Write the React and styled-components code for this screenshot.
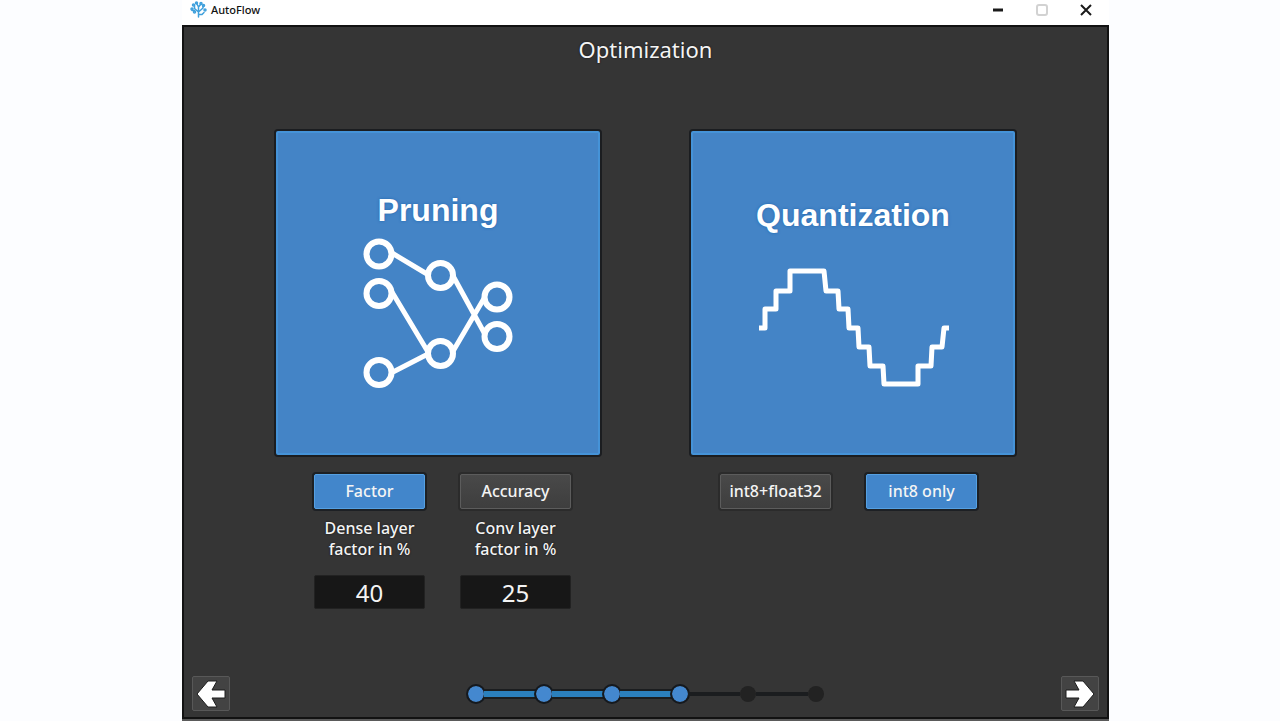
import React, { useState } from 'react';
import styled, { createGlobalStyle } from 'styled-components';

const GlobalStyle = createGlobalStyle`
  * {
    box-sizing: border-box;
  }
  body {
    margin: 0;
    background-color: #fcfdff;
    font-family: "Noto Sans", "Open Sans", sans-serif;
  }
`;

const Page = styled.div`
  display: grid;
  grid-template-columns: 182fr 927fr 171fr;
  min-height: 100vh;
`;

const Window = styled.div`
  grid-column: 2;
  display: flex;
  flex-direction: column;
  min-width: 0;
  border-bottom: 2px solid #5a5a5a;
`;

const TitleBar = styled.header`
  display: flex;
  align-items: center;
  height: 25px;
  padding: 0 13px 6px 8px;
  background-color: #fff;
`;

const AppName = styled.span`
  flex: 1;
  padding-left: 4px;
  font-size: 11px;
  line-height: 16px;
  font-weight: 500;
  color: #111;
`;

const WindowControls = styled.div`
  display: flex;
  gap: 24px;
`;

const ControlButton = styled.button`
  display: flex;
  align-items: center;
  justify-content: center;
  width: 20px;
  height: 18px;
  padding: 0;
  border: none;
  background: none;
  color: ${({ disabled }) => (disabled ? '#d2d2d2' : '#1a1a1a')};
`;

const Content = styled.main`
  flex: 1;
  display: flex;
  flex-direction: column;
  padding: 6px 8px;
  border: 2px solid #121212;
  background-color: #353535;
`;

const Title = styled.h1`
  margin: 0 0 66px;
  font-size: 22px;
  line-height: 32px;
  font-weight: 400;
  text-align: center;
  color: #f4f4f4;
  text-shadow: 0 0 2px #111;
`;

const Methods = styled.div`
  display: flex;
  justify-content: center;
  gap: 91px;
`;

const Method = styled.section`
  width: 324px;
`;

const Card = styled.div`
  display: flex;
  flex-direction: column;
  align-items: center;
  justify-content: center;
  gap: 8px;
  height: 324px;
  padding-bottom: 4px;
  border: 2px solid #4593d8;
  border-radius: 2px;
  background-color: #4484c6;
  box-shadow: 0 0 0 2px #1b1d20;
`;

const CardTitle = styled.h2`
  margin: 0;
  font-family: "Liberation Sans", Arial, sans-serif;
  font-size: 32px;
  line-height: 36px;
  font-weight: 700;
  color: #fff;
  text-shadow: 0 0 3px #1f66ae;
`;

const Drawing = styled.svg`
  overflow: visible;
  fill: none;
  stroke: #fff;
  stroke-width: 5;
`;

const Options = styled.div`
  display: flex;
  justify-content: ${({ $align }) => $align};
  gap: 35px;
  padding: 19px ${({ $align }) => ($align === 'flex-end' ? '38px 0 0' : '0 0 38px')};
`;

const Option = styled.div`
  display: flex;
  flex-direction: column;
  width: 111px;
`;

const OptionButton = styled.button`
  height: 35px;
  padding: 0;
  border: 1px solid ${({ $active }) => ($active ? '#55a0e2' : '#5c5c5c')};
  border-radius: 2px;
  background: ${({ $active }) => ($active ? '#4286cb' : 'linear-gradient(#494949, #3e3e3e)')};
  box-shadow: 0 0 0 2px ${({ $active }) => ($active ? '#1d2024' : '#2b2b2b')};
  font-family: inherit;
  font-size: 16px;
  line-height: 21px;
  font-weight: 500;
  white-space: nowrap;
  color: #f4f4f4;
`;

const OptionLabel = styled.label`
  padding: 9px 0 15px;
  font-size: 16px;
  line-height: 21px;
  font-weight: 500;
  text-align: center;
  color: #f4f4f4;
  text-shadow: 0 0 2px #111;
`;

const OptionInput = styled.input`
  width: 100%;
  height: 34px;
  padding: 0;
  border: 1px solid #222;
  border-radius: 2px;
  background-color: #171717;
  font-family: inherit;
  font-size: 24px;
  line-height: 32px;
  text-align: center;
  color: #f4f4f4;
`;

const Footer = styled.footer`
  display: flex;
  align-items: center;
  justify-content: space-between;
  margin-top: auto;
`;

const NavButton = styled.button`
  display: flex;
  align-items: center;
  justify-content: center;
  width: 38px;
  height: 35px;
  padding: 0;
  border: 1px solid #585858;
  border-radius: 2px;
  background-color: #434343;
`;

const Steps = styled.ol`
  display: flex;
  align-items: center;
  margin: 0;
  padding: 0;
  list-style: none;
`;

const Step = styled.li`
  display: flex;
  align-items: center;
`;

const StepDot = styled.span`
  width: 20px;
  height: 20px;
  border: 2px solid ${({ $done }) => ($done ? '#15191e' : 'transparent')};
  border-radius: 50%;
  background-color: ${({ $done }) => ($done ? '#4488cf' : '#222')};
  background-clip: padding-box;
`;

const StepLine = styled.span`
  width: 52px;
  height: ${({ $done }) => ($done ? '10px' : '4px')};
  margin: 0 -2px;
  border: solid #1b1d1f;
  border-width: 2px 0;
  background-color: #2b80bd;
`;

const Logo = () => (
  <svg width="17" height="17" viewBox="0 0 17 17" fill="none" stroke="#3fa0dc" strokeWidth="1.5" strokeLinecap="round" aria-hidden="true">
    <path d="M8.500 16V6M8.500 11L4.500 7.500M8.500 11L13 7M8.500 13.500H12L14 11.500M4.500 7.500V4M4.500 9.500H2M8.500 6L6.500 2M8.500 6L11 3M13 7V4.500" />
    <circle cx="6.500" cy="2" r="1" />
    <circle cx="11" cy="2.500" r="1" />
    <circle cx="3.500" cy="4" r="1" />
    <circle cx="13.500" cy="4.500" r="1" />
    <circle cx="2" cy="8" r="1" />
    <circle cx="15" cy="9" r="1" />
    <circle cx="4.500" cy="11" r="1" />
  </svg>
);

const NetworkDrawing = () => (
  <Drawing width="156" height="154" viewBox="0 0 156 154" aria-hidden="true">
    <path d="M32 17L67 38M32 56L68 116M33 136L68 118M92 38L127 102M92 117L126 59" />
    <g fill="#4484c6" strokeWidth="6">
      <circle cx="19" cy="18" r="12.500" />
      <circle cx="19" cy="57.500" r="12.500" />
      <circle cx="19" cy="136.500" r="12.500" />
      <circle cx="80.500" cy="39.500" r="12.500" />
      <circle cx="80.500" cy="117.500" r="12.500" />
      <circle cx="137" cy="61" r="12.500" />
      <circle cx="137" cy="100.500" r="12.500" />
    </g>
  </Drawing>
);

const WaveDrawing = () => (
  <Drawing width="192" height="145" viewBox="0 -1 192 145" strokeLinejoin="round" aria-hidden="true">
    <path d="M2 86H8V67H19V49H33V29H67L69 49H81L82 67H91L92 86H101L102 105H112L113 124H126L127 142H161V124H174L175 105H185L187 86H192" />
  </Drawing>
);

const Arrow = ({ flipped }) => (
  <svg width="30" height="28" viewBox="0 0 30 28" aria-hidden="true">
    <path
      d="M1 14L12 1H21L16 10H29V18H16L21 27H12Z"
      transform={flipped ? 'rotate(180 15 14)' : undefined}
      fill="#fff"
      stroke="#1c1c1c"
      strokeWidth="1"
    />
  </svg>
);

const STEP_COUNT = 6;
const CURRENT_STEP = 4;

const Progress = () => (
  <Steps aria-label="Progress">
    {Array.from({ length: STEP_COUNT }, (_, i) => (
      <Step key={i} aria-current={i + 1 === CURRENT_STEP ? 'step' : undefined}>
        {i > 0 && <StepLine $done={i < CURRENT_STEP} />}
        <StepDot $done={i < CURRENT_STEP} />
      </Step>
    ))}
  </Steps>
);

const App = () => {
  const [pruning, setPruning] = useState('factor');
  const [quantization, setQuantization] = useState('int8');

  return (
    <>
      <GlobalStyle />
      <Page>
        <Window>
          <TitleBar>
            <Logo />
            <AppName>AutoFlow</AppName>
            <WindowControls>
              <ControlButton aria-label="Minimize">
                <svg width="12" height="12" stroke="currentColor" strokeWidth="3">
                  <path d="M1 6H11" />
                </svg>
              </ControlButton>
              <ControlButton aria-label="Maximize" disabled>
                <svg width="12" height="12" fill="none" stroke="currentColor" strokeWidth="2">
                  <rect x="1" y="1" width="10" height="10" rx="2" />
                </svg>
              </ControlButton>
              <ControlButton aria-label="Close">
                <svg width="12" height="12" stroke="currentColor" strokeWidth="2">
                  <path d="M1 1L11 11M11 1L1 11" />
                </svg>
              </ControlButton>
            </WindowControls>
          </TitleBar>
          <Content>
            <Title>Optimization</Title>
            <Methods>
              <Method>
                <Card>
                  <CardTitle>Pruning</CardTitle>
                  <NetworkDrawing />
                </Card>
                <Options $align="flex-start">
                  <Option>
                    <OptionButton $active={pruning === 'factor'} onClick={() => setPruning('factor')}>
                      Factor
                    </OptionButton>
                    <OptionLabel htmlFor="dense">Dense layer<br />factor in %</OptionLabel>
                    <OptionInput id="dense" type="text" defaultValue="40" />
                  </Option>
                  <Option>
                    <OptionButton $active={pruning === 'accuracy'} onClick={() => setPruning('accuracy')}>
                      Accuracy
                    </OptionButton>
                    <OptionLabel htmlFor="conv">Conv layer<br />factor in %</OptionLabel>
                    <OptionInput id="conv" type="text" defaultValue="25" />
                  </Option>
                </Options>
              </Method>
              <Method>
                <Card>
                  <CardTitle>Quantization</CardTitle>
                  <WaveDrawing />
                </Card>
                <Options $align="flex-end">
                  <Option>
                    <OptionButton $active={quantization === 'mixed'} onClick={() => setQuantization('mixed')}>
                      int8+float32
                    </OptionButton>
                  </Option>
                  <Option>
                    <OptionButton $active={quantization === 'int8'} onClick={() => setQuantization('int8')}>
                      int8 only
                    </OptionButton>
                  </Option>
                </Options>
              </Method>
            </Methods>
            <Footer>
              <NavButton aria-label="Back">
                <Arrow />
              </NavButton>
              <Progress />
              <NavButton aria-label="Next">
                <Arrow flipped />
              </NavButton>
            </Footer>
          </Content>
        </Window>
      </Page>
    </>
  );
};

export default App;
